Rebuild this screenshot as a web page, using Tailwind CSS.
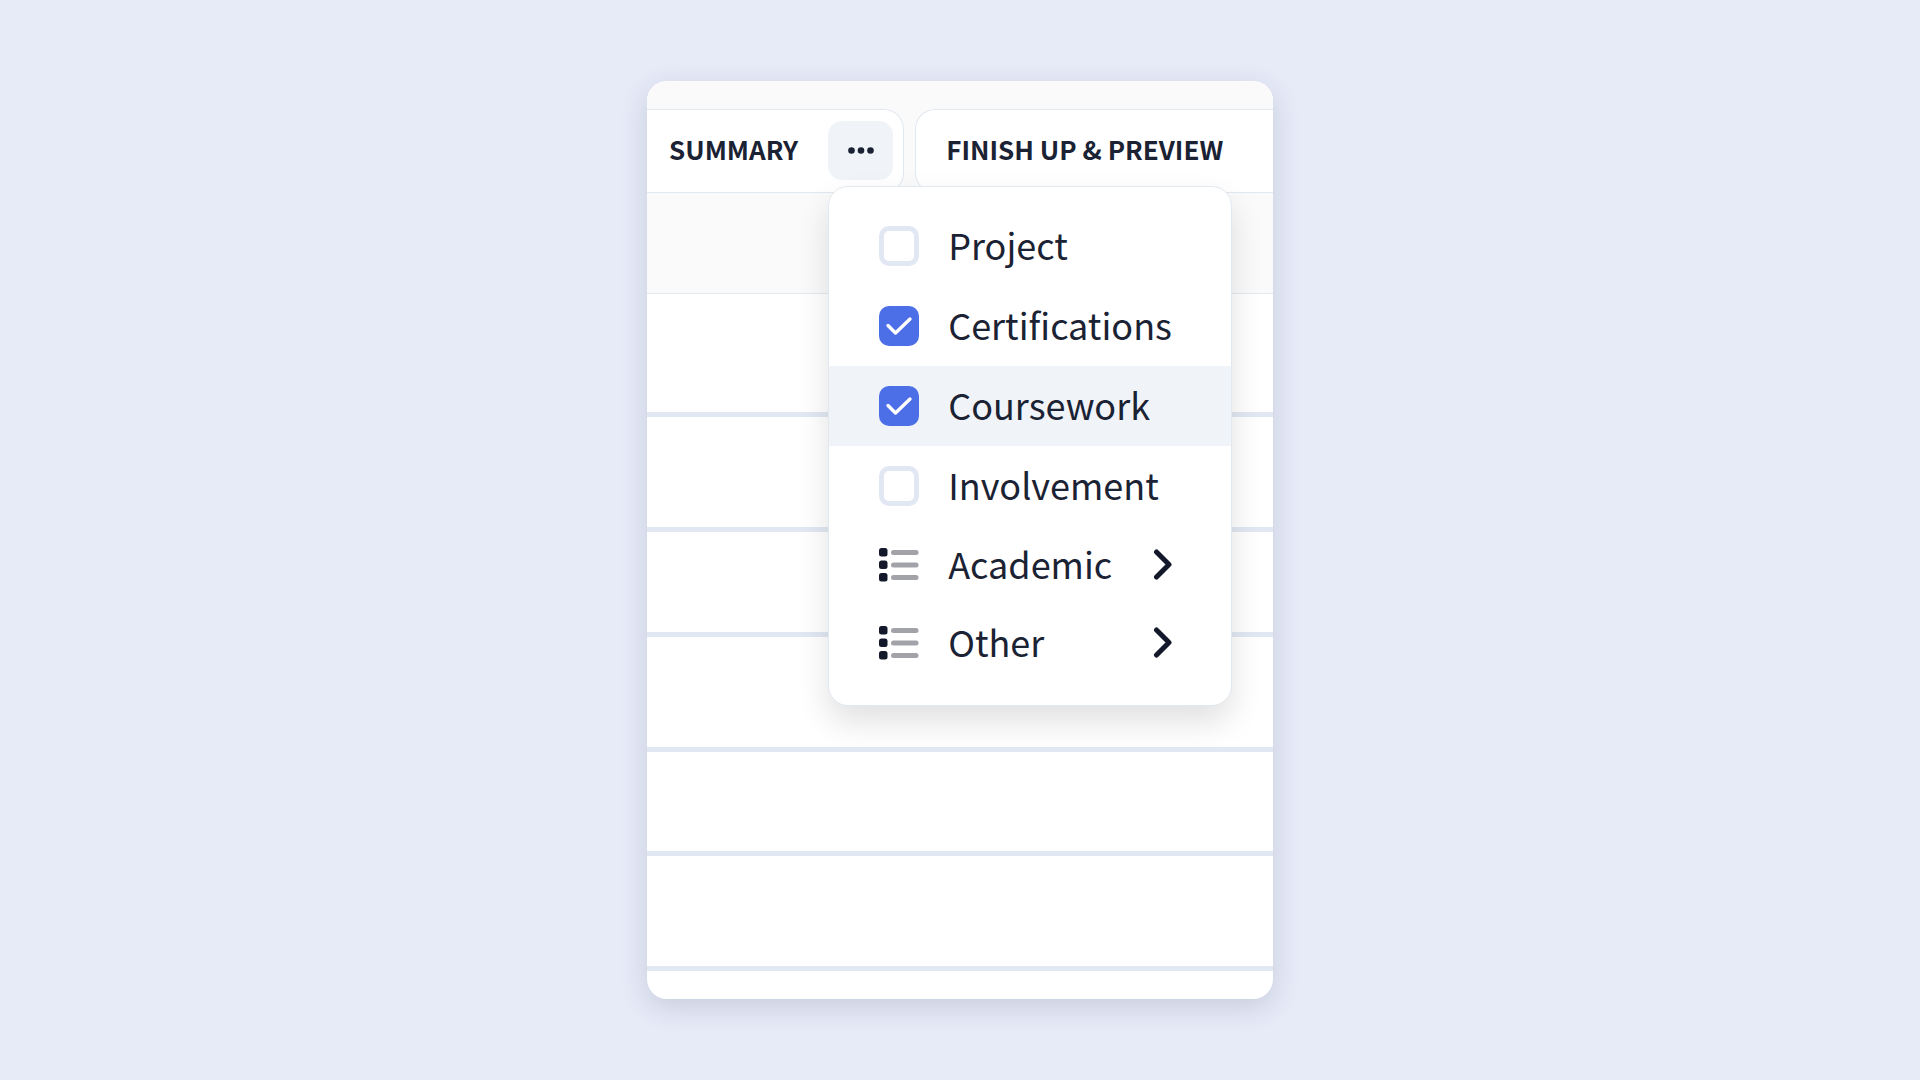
<!DOCTYPE html>
<html lang="en">
<head>
  <meta charset="UTF-8">
  <meta name="viewport" content="width=device-width, initial-scale=1.0">
  <title>Resume Sections</title>
  <script src="https://cdn.jsdelivr.net/npm/@tailwindcss/browser@4"></script>
</head>
<body class="min-h-screen bg-[#e7ebf8] flex items-center justify-center font-['Noto_Sans_CJK_SC','Noto_Sans',sans-serif] text-[#1a2233]">

  <main class="w-full max-w-[626px] bg-white rounded-[20px] overflow-hidden shadow-[0_8px_28px_rgba(30,41,80,0.16)]">

    <!-- Section tabs -->
    <header class="bg-[#fafafa] pt-7 border-b border-slate-200 pb-[100px]">
      <nav class="flex gap-[11px] h-[84px] border-b border-slate-200 text-[26px] font-semibold leading-none">
        <div class="flex items-center gap-[30px] h-[84px] pl-[22px] pr-[10px] pb-0.5 bg-white border border-l-0 border-slate-200 rounded-r-[20px]">
          <a href="#summary" class="whitespace-nowrap pb-0.5">SUMMARY</a>
          <div class="relative">
            <button type="button" aria-label="More sections" aria-expanded="true" class="flex items-center justify-center w-[65px] h-[59px] rounded-[14px] bg-[#f0f4f9]">
              <svg class="w-[26px] h-2" viewBox="0 0 26 8" fill="currentColor">
                <circle cx="3.5" cy="4.5" r="3.3"/>
                <circle cx="13" cy="4.5" r="3.3"/>
                <circle cx="22.5" cy="4.5" r="3.3"/>
              </svg>
            </button>

            <!-- Dropdown -->
            <div class="absolute left-0 top-full mt-[6px] z-10 w-[404px] pt-[19px] pb-[23px] bg-white border border-slate-200 rounded-[20px] text-[36px] font-normal shadow-[0_16px_32px_rgba(0,0,0,0.12)]">
              <label class="flex items-center gap-[29px] h-20 pl-[50px]">
                <input type="checkbox" class="appearance-none w-10 h-10 rounded-[10px] border-5 border-[#e2e8f3] bg-white">
                <span class="pb-1">Project</span>
              </label>
              <label class="flex items-center gap-[29px] h-20 pl-[50px]">
                <span class="relative flex">
                  <input type="checkbox" checked class="appearance-none w-10 h-10 rounded-[10px] bg-[#4c6fe8]">
                  <svg class="absolute inset-0 w-10 h-10 pointer-events-none" viewBox="0 0 40 40" fill="none" stroke="#fff" stroke-width="3.4" stroke-linecap="round" stroke-linejoin="round"><path d="M9 19.5l7.5 7.5L31 13"/></svg>
                </span>
                <span class="pb-1">Certifications</span>
              </label>
              <label class="flex items-center gap-[29px] h-20 pl-[50px] bg-[#f0f4f9]">
                <span class="relative flex">
                  <input type="checkbox" checked class="appearance-none w-10 h-10 rounded-[10px] bg-[#4c6fe8]">
                  <svg class="absolute inset-0 w-10 h-10 pointer-events-none" viewBox="0 0 40 40" fill="none" stroke="#fff" stroke-width="3.4" stroke-linecap="round" stroke-linejoin="round"><path d="M9 19.5l7.5 7.5L31 13"/></svg>
                </span>
                <span class="pb-1">Coursework</span>
              </label>
              <label class="flex items-center gap-[29px] h-20 pl-[50px]">
                <input type="checkbox" class="appearance-none w-10 h-10 rounded-[10px] border-5 border-[#e2e8f3] bg-white">
                <span class="pb-1">Involvement</span>
              </label>
              <button type="button" class="flex items-center gap-[29px] w-full h-[78px] pl-[50px] pr-[58px] text-left">
                <svg class="w-10 h-10" viewBox="0 0 40 40">
                  <g fill="#14182b"><rect y="3" width="8.5" height="8.5" rx="2.5"/><rect y="15.5" width="8.5" height="8.5" rx="2.5"/><rect y="28" width="8.5" height="8.5" rx="2.5"/></g>
                  <g fill="#a1a3a9"><rect x="12" y="5" width="27.5" height="5" rx="2.5"/><rect x="12" y="17.5" width="27.5" height="5" rx="2.5"/><rect x="12" y="30" width="27.5" height="5" rx="2.5"/></g>
                </svg>
                <span class="flex-1 pb-1">Academic</span>
                <svg class="w-5 h-8" viewBox="0 0 20 32" fill="none" stroke="#14182b" stroke-width="5" stroke-linecap="round" stroke-linejoin="round"><path d="M3.5 3L16 15.5L3.5 28"/></svg>
              </button>
              <button type="button" class="flex items-center gap-[29px] w-full h-[78px] pl-[50px] pr-[58px] text-left">
                <svg class="w-10 h-10" viewBox="0 0 40 40">
                  <g fill="#14182b"><rect y="3" width="8.5" height="8.5" rx="2.5"/><rect y="15.5" width="8.5" height="8.5" rx="2.5"/><rect y="28" width="8.5" height="8.5" rx="2.5"/></g>
                  <g fill="#a1a3a9"><rect x="12" y="5" width="27.5" height="5" rx="2.5"/><rect x="12" y="17.5" width="27.5" height="5" rx="2.5"/><rect x="12" y="30" width="27.5" height="5" rx="2.5"/></g>
                </svg>
                <span class="flex-1 pb-1">Other</span>
                <svg class="w-5 h-8" viewBox="0 0 20 32" fill="none" stroke="#14182b" stroke-width="5" stroke-linecap="round" stroke-linejoin="round"><path d="M3.5 3L16 15.5L3.5 28"/></svg>
              </button>
            </div>
          </div>
        </div>
        <div class="flex flex-1 items-center h-[84px] pl-[30px] pb-0.5 bg-white border border-r-0 border-slate-200 rounded-l-[20px]">
          <a href="#finish" class="whitespace-nowrap pb-0.5">FINISH UP &amp; PREVIEW</a>
        </div>
      </nav>
    </header>

    <!-- Empty rows -->
    <div class="h-[123px] border-b-5 border-[#e2e8f3]"></div>
    <div class="h-[115px] border-b-5 border-[#e2e8f3]"></div>
    <div class="h-[105px] border-b-5 border-[#e2e8f3]"></div>
    <div class="h-[115px] border-b-5 border-[#e2e8f3]"></div>
    <div class="h-[104px] border-b-5 border-[#e2e8f3]"></div>
    <div class="h-[115px] border-b-5 border-[#e2e8f3]"></div>
    <div class="h-7"></div>
  </main>

</body>
</html>
